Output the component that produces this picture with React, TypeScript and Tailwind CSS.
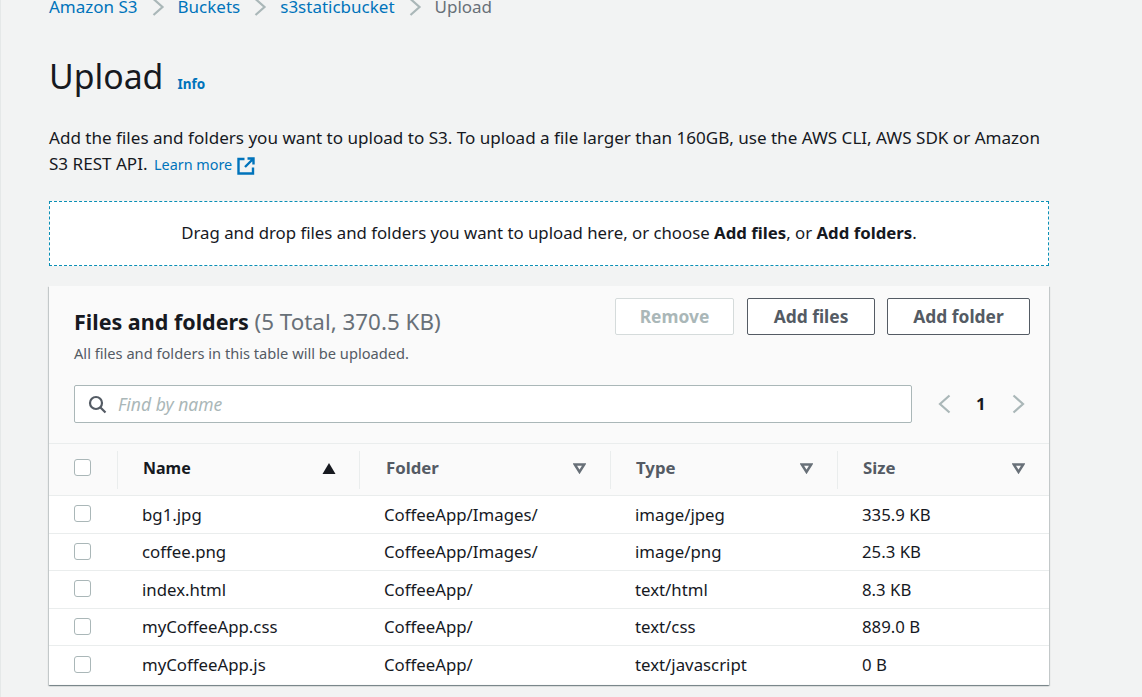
const files = [
  { name: 'bg1.jpg', folder: 'CoffeeApp/Images/', type: 'image/jpeg', size: '335.9 KB', height: 'h-[38px]' },
  { name: 'coffee.png', folder: 'CoffeeApp/Images/', type: 'image/png', size: '25.3 KB', height: 'h-[37px]' },
  { name: 'index.html', folder: 'CoffeeApp/', type: 'text/html', size: '8.3 KB', height: 'h-[38px]' },
  { name: 'myCoffeeApp.css', folder: 'CoffeeApp/', type: 'text/css', size: '889.0 B', height: 'h-[37px]' },
  { name: 'myCoffeeApp.js', folder: 'CoffeeApp/', type: 'text/javascript', size: '0 B', height: 'h-[38px]' },
];

const Crumb = () => (
  <svg width="16" height="18" viewBox="0 0 16 18" fill="none" stroke="#aab7b8" strokeWidth="2.2">
    <path d="M3.5 1l9 8-9 8" />
  </svg>
);

const Checkbox = () => <div className="h-[17px] w-[17px] rounded-[3px] border border-[#aab7b8] bg-white" />;

const SortDown = () => (
  <svg width="13" height="11" viewBox="0 0 13 11" fill="none" stroke="#687078" strokeWidth="2.4">
    <path d="M1.8 1.5h9.4L6.5 9z" />
  </svg>
);

const Head = ({ label, className }: { label: string; className: string }) => (
  <div className={`flex h-[38px] items-center border-l border-[#eaeded] ${className}`}>
    <span className="pb-[3px] font-bold text-[#545b64]">{label}</span>
    <span className="mb-[2px] ml-auto flex">
      <SortDown />
    </span>
  </div>
);

export default function App() {
  return (
    <div className="h-[697px] overflow-hidden border-l border-[#e5e8e8] bg-[#f2f3f3] font-['Noto_Sans',sans-serif] text-[16.8px] text-[#16191f]">
      <div className="ml-[48px] w-[1000px]">
        {/* Breadcrumbs */}
        <nav className="-mt-[5px] flex h-[24px] items-center text-[17px] text-[#0073bb]">
          <span>Amazon S3</span>
          <span className="mx-[12px]"><Crumb /></span>
          <span>Buckets</span>
          <span className="mx-[12px]"><Crumb /></span>
          <span>s3staticbucket</span>
          <span className="mx-[12px]"><Crumb /></span>
          <span className="text-[#687078]">Upload</span>
        </nav>

        {/* Title */}
        <div className="mt-[35px] flex items-baseline">
          <h1 className="text-[33.8px] leading-[44px] text-[#16191f]">Upload</h1>
          <a className="ml-[14px] text-[13.5px] font-bold text-[#0073bb]">Info</a>
        </div>

        <p className="mt-[27px] text-[17.07px] leading-[26px]">
          Add the files and folders you want to upload to S3. To upload a file larger than 160GB, use the AWS CLI, AWS SDK or Amazon S3 REST API.{' '}
          <a className="ml-[2px] inline-flex items-center text-[14.4px] text-[#0073bb]">
            <span className="pb-[2px]">Learn more</span>
            <svg className="ml-[5px]" width="18" height="18" viewBox="0 0 18 18" fill="none" stroke="#0073bb" strokeWidth="2.4">
              <path d="M7.5 2H1.5v14.5H16V10.5M10.5 1.5h6v6M16.5 1.5L8 10" />
            </svg>
          </a>
        </p>

        {/* Drop zone */}
        <div className="mt-[21px] flex h-[65px] items-center justify-center border border-dashed border-[#0a8fb5] bg-white">
          <p className="pb-[2px]">
            Drag and drop files and folders you want to upload here, or choose <b>Add files</b>, or <b>Add folders</b>.
          </p>
        </div>

        {/* Files table */}
        <div className="mt-[20px] h-[399px] bg-[#fafafa] shadow-[0_1px_1px_0_rgba(0,28,36,0.3),1px_1px_1px_0_rgba(0,28,36,0.15),-1px_1px_1px_0_rgba(0,28,36,0.15)]">
          <div className="flex pt-[12px] pr-[19px] pl-[25px]">
            <div>
              <h2 className="mt-[9px] text-[21.5px] leading-[30px] font-bold">
                Files and folders <span className="text-[22.4px] font-normal text-[#687078]">(5 Total, 370.5 KB)</span>
              </h2>
              <p className="mt-[6px] text-[14.65px] leading-[20px] text-[#545b64]">All files and folders in this table will be uploaded.</p>
            </div>
            <div className="ml-auto flex text-[17.4px] font-bold">
              <button className="mr-[13px] h-[37px] w-[119px] rounded-[2px] border border-[#d5dbdb] bg-white text-[#aab7b8]">Remove</button>
              <button className="mr-[12px] h-[37px] w-[128px] rounded-[2px] border border-[#545b64] bg-white text-[#545b64]">Add files</button>
              <button className="h-[37px] w-[143px] rounded-[2px] border border-[#545b64] bg-white text-[#545b64]">Add folder</button>
            </div>
          </div>

          {/* Search and pagination */}
          <div className="mt-[22px] flex items-center pl-[25px]">
            <div className="flex h-[38px] w-[838px] items-center rounded-[2px] border border-[#aab7b8] bg-white pl-[13px]">
              <svg width="19" height="19" viewBox="0 0 19 19" fill="none" stroke="#545b64" strokeWidth="2.2">
                <circle cx="8" cy="8" r="6" />
                <path d="M12.5 12.5l5 5" />
              </svg>
              <span className="ml-[11px] text-[17.5px] text-[#aab7b8] italic">Find by name</span>
            </div>
            <svg className="ml-[26px]" width="13" height="20" viewBox="0 0 13 20" fill="none" stroke="#aab7b8" strokeWidth="2.2">
              <path d="M11.5 1.5L2 10l9.5 8.5" />
            </svg>
            <span className="ml-[25px] w-[8px] font-bold">1</span>
            <svg className="ml-[28px]" width="13" height="20" viewBox="0 0 13 20" fill="none" stroke="#aab7b8" strokeWidth="2.2">
              <path d="M1.5 1.5L11 10l-9.5 8.5" />
            </svg>
          </div>

          {/* Table header */}
          <div className="mt-[20px] grid h-[53px] grid-cols-[68px_242px_251px_227px_212px] items-center border-y border-[#eaeded]">
            <div className="-mt-[4px] pl-[25px]"><Checkbox /></div>
            <div className="flex h-[38px] items-center border-l border-[#eaeded] pr-[23px] pl-[25px]">
              <span className="pb-[3px] text-[16px] font-bold">Name</span>
              <svg className="mb-[2px] ml-auto" width="14" height="11" viewBox="0 0 14 11" fill="#16191f">
                <path d="M7 0l6.5 11H.5z" />
              </svg>
            </div>
            <Head label="Folder" className="pr-[24px] pl-[26px]" />
            <Head label="Type" className="pr-[24px] pl-[25px]" />
            <Head label="Size" className="pr-[24px] pl-[25px]" />
          </div>

          {files.map((f) => (
            <div key={f.name} className={`grid grid-cols-[93px_242px_251px_227px_187px] items-center border-b border-[#eaeded] bg-white last:border-b-0 ${f.height}`}>
              <div className="pb-[2px] pl-[25px]"><Checkbox /></div>
              <div>{f.name}</div>
              <div>{f.folder}</div>
              <div>{f.type}</div>
              <div>{f.size}</div>
            </div>
          ))}
        </div>
      </div>
    </div>
  );
}
